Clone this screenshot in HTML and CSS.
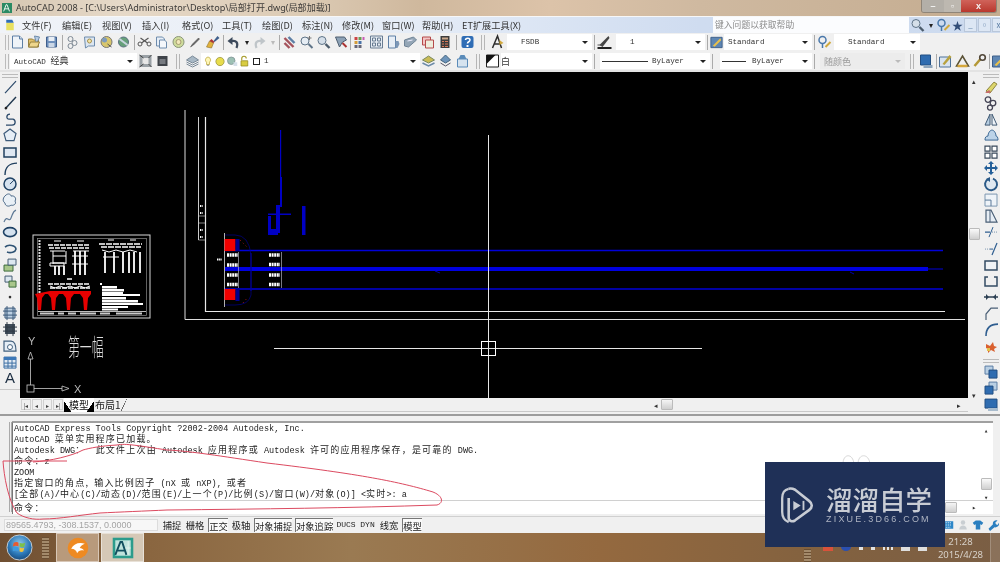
FILE: index.html
```html
<!DOCTYPE html>
<html lang="zh-CN">
<head>
<meta charset="utf-8">
<title>AutoCAD 2008</title>
<link rel="stylesheet" href="styles.css">
</head>
<body>
<svg class="defs" width="0" height="0">
  <symbol id="doc" viewBox="0 0 16 16"><path d="M3 2h7l3 3v9H3z" fill="#eef3f8" stroke="#5d7fa5"/><path d="M10 2v3h3" fill="#cfdcec" stroke="#5d7fa5"/></symbol>
  <symbol id="open" viewBox="0 0 16 16"><path d="M2 5h4l1 1h5v7H2z" fill="#e2c16a" stroke="#96803f"/><path d="M8 2l5 1-3 7z" fill="#b7cce2" stroke="#6e8cad"/><path d="M2 13l2-5h9l-2 5z" fill="#eed68c" stroke="#96803f"/></symbol>
  <symbol id="save" viewBox="0 0 16 16"><path d="M3 3h10v10H3z" fill="#6f90bc" stroke="#3f5f8c"/><path d="M5 3h6v4H5z" fill="#e8eef5"/><path d="M5 9h6v4H5z" fill="#cbd7e6"/></symbol>
  <symbol id="print" viewBox="0 0 16 16"><circle cx="6" cy="5" r="2.500" fill="none" stroke="#808b96"/><circle cx="10" cy="9" r="2.500" fill="none" stroke="#808b96"/><circle cx="6" cy="12" r="2.500" fill="none" stroke="#808b96"/></symbol>
  <symbol id="prev" viewBox="0 0 16 16"><path d="M3 3h10v9H7l-3 2z" fill="#dce6f0" stroke="#6e8cad"/><circle cx="8" cy="7" r="2" fill="#f5e6a8" stroke="#a58f4c"/></symbol>
  <symbol id="plot" viewBox="0 0 16 16"><circle cx="8" cy="8" r="5.500" fill="#d8c66c" stroke="#777"/><circle cx="6" cy="6" r="2.500" fill="#7d9bbd"/><path d="M9 10l4 3" stroke="#555"/></symbol>
  <symbol id="globe" viewBox="0 0 16 16"><circle cx="8" cy="8" r="5" fill="#66a07a" stroke="#5a6f7f"/><path d="M4 5l8 6" stroke="#c8d5de" stroke-width="2"/></symbol>
  <symbol id="cut" viewBox="0 0 16 16"><circle cx="3.500" cy="10" r="2" fill="none" stroke="#555"/><circle cx="12.500" cy="10" r="2" fill="none" stroke="#555"/><path d="M5 9l7-5M11 9L4 4" stroke="#555" stroke-width="1.200"/></symbol>
  <symbol id="copy" viewBox="0 0 16 16"><path d="M3 3h6l2 2v7H3z" fill="#e8eff7" stroke="#6e8cad"/><path d="M6 6h5l2 2v6H6z" fill="#f4f7fb" stroke="#6e8cad"/></symbol>
  <symbol id="paste" viewBox="0 0 16 16"><circle cx="8" cy="8" r="5.500" fill="#cfdc9c" stroke="#89957a"/><circle cx="8" cy="8" r="2.500" fill="#f1e8ba" stroke="#a59b70"/></symbol>
  <symbol id="brush" viewBox="0 0 16 16"><path d="M3 13l2-3 6-6 1 1-6 6z" fill="#666" stroke="#444" stroke-width=".5"/></symbol>
  <symbol id="match" viewBox="0 0 16 16"><path d="M9 7l4-5 2 2-5 4z" fill="#3f5f8c"/><path d="M2 13l3-6 4 2-2 5z" fill="#e3b23c" stroke="#8a6f2a" stroke-width=".6"/><path d="M5 7l2-2 3 3-1 1z" fill="#a33"/></symbol>
  <symbol id="undo" viewBox="0 0 16 16"><path d="M11 14c2-5 0-8-5-7" fill="none" stroke="#3d4a5c" stroke-width="2.200"/><path d="M2 7l5-4v8z" fill="#3d4a5c"/></symbol>
  <symbol id="redo" viewBox="0 0 16 16"><path d="M5 14c-2-5 0-8 5-7" fill="none" stroke="#bfc5c9" stroke-width="2.200"/><path d="M14 7l-5-4v8z" fill="#bfc5c9"/></symbol>
  <symbol id="pan" viewBox="0 0 16 16"><path d="M3 4l9 9M3 9l5 5" stroke="#a5535c" stroke-width="2.400"/><path d="M7 3l6 6" stroke="#5d7fa5" stroke-width="2.400"/></symbol>
  <symbol id="zrt" viewBox="0 0 16 16"><circle cx="6.500" cy="7" r="4" fill="#e6edf4" stroke="#5f7488"/><path d="M10 10l4 4" stroke="#5f7488" stroke-width="2"/><path d="M11 2v4M9 4h4" stroke="#777"/></symbol>
  <symbol id="zwin" viewBox="0 0 16 16"><circle cx="6.500" cy="6.500" r="4" fill="#d5dfe9" stroke="#5f7488"/><path d="M10 10l4 4" stroke="#4c5c6c" stroke-width="2.400"/></symbol>
  <symbol id="zprev" viewBox="0 0 16 16"><path d="M3 3h9l2 3-4 2-3 5-2-5z" fill="#8da2b6" stroke="#4e5e70"/><path d="M10 9l4 4" stroke="#a33" stroke-width="2"/></symbol>
  <symbol id="props" viewBox="0 0 16 16"><path d="M3 3h3v3H3z" fill="#c44"/><path d="M7 3h3v3H7z" fill="#6a9c54"/><path d="M11 3h2v3h-2z" fill="#c85ab4"/><path d="M3 7h3v3H3z" fill="#d59d3a"/><path d="M7 7h3v3H7z" fill="#4a73a8"/><path d="M3 11h3v3H3zM7 11h3v3H7z" fill="#667"/></symbol>
  <symbol id="dc" viewBox="0 0 16 16"><path d="M2 2h12v12H2z" fill="#e5ebf2" stroke="#687c92"/><path d="M4 4h3v3H4zM9 4h3v3H9zM4 9h3v3H4zM9 9h3v3H9z" fill="none" stroke="#687c92"/></symbol>
  <symbol id="sheet" viewBox="0 0 16 16"><path d="M3 2h7v12H3z" fill="#e7eef6" stroke="#5d7fa5"/><path d="M10 7h3l1 3-2 4h-2z" fill="#7c97b7"/></symbol>
  <symbol id="tool" viewBox="0 0 16 16"><path d="M2 6l9-3 3 3-8 7-4-1z" fill="#94a6b6" stroke="#6f8396"/><path d="M5 7l5-1" stroke="#eef"/></symbol>
  <symbol id="markup" viewBox="0 0 16 16"><path d="M3 3h8v8H3z" fill="#f2c6c6" stroke="#b54b4b"/><path d="M6 6h8v8H6z" fill="#eed" stroke="#b54b4b"/></symbol>
  <symbol id="calc" viewBox="0 0 16 16"><path d="M4 2h9v12H4z" fill="#3c3c3c"/><path d="M5.500 3.500h6v2h-6z" fill="#c9a68a"/><path d="M5.500 7h2v1h-2zM8.500 7h3v1h-3zM5.500 9.500h2v1h-2zM8.500 9.500h3v1h-3zM5.500 12h2v1h-2zM8.500 12h3v1h-3z" fill="#d97a5a"/></symbol>
  <symbol id="help" viewBox="0 0 16 16"><rect x="2" y="2" width="12" height="12" rx="2" fill="#2f6db5"/><path d="M6 6c0-2.500 4.500-2.500 4.500 0 0 2-2.500 1.500-2.500 3.500" fill="none" stroke="#fff" stroke-width="1.500"/><path d="M7 11h2v2H7z" fill="#fff"/></symbol>
  <symbol id="astyle" viewBox="0 0 16 16"><path d="M3 14L8 2l4 12M5 10h6" fill="none" stroke="#2c2c2c" stroke-width="1.500"/><path d="M10 6l4 3-4 2z" fill="#d2a93e"/></symbol>
  <symbol id="wkspace" viewBox="0 0 16 16"><path d="M2 2h12v12H2z" fill="#9aa1a6"/><path d="M5 5h6v6H5z" fill="#e7e7e7"/><path d="M2 2l4 3M14 2l-3 3M2 14l4-3M14 14l-3-3" stroke="#444"/></symbol>
  <symbol id="wk2" viewBox="0 0 16 16"><path d="M3 3h10v10H3z" fill="#40444a"/><path d="M5 6h6v5H5z" fill="#787c82"/></symbol>
  <symbol id="layers" viewBox="0 0 16 16"><path d="M8 3l6 4-6 3-6-3z" fill="#a8b8c5" stroke="#7a8a98"/><path d="M2 9l6 3 6-3M2 11l6 3 6-3" fill="none" stroke="#7a8a98"/></symbol>
  <symbol id="lamp" viewBox="0 0 16 16"><path d="M8 2a4 4 0 0 1 2 7v3H6V9a4 4 0 0 1 2-7z" fill="#fff7b8" stroke="#bda83c"/><path d="M6.500 13h3" stroke="#777"/></symbol>
  <symbol id="sun" viewBox="0 0 16 16"><circle cx="8" cy="8" r="5.500" fill="#e7dc4c" stroke="#97903a"/></symbol>
  <symbol id="frz" viewBox="0 0 16 16"><circle cx="7" cy="7" r="5" fill="#9cc0b4" stroke="#7c8f92"/><path d="M10 9h5v5h-5z" fill="#d5e0ea"/></symbol>
  <symbol id="lock" viewBox="0 0 16 16"><path d="M5 6V4a3 3 0 0 1 6 0" fill="none" stroke="#a59a28" stroke-width="1.500"/><path d="M4 7h9v7H4z" fill="#d8cc42" stroke="#93881e"/></symbol>
  <symbol id="lay2" viewBox="0 0 16 16"><path d="M8 3l6 4-6 3-6-3z" fill="#c9bb55" stroke="#7a8a60"/><path d="M2 10l6 3 6-3" fill="none" stroke="#6b8aa8" stroke-width="1.500"/></symbol>
  <symbol id="lay3" viewBox="0 0 16 16"><path d="M8 2l5 5-5 3-5-3z" fill="#6d94ba" stroke="#44647f"/><path d="M3 10l5 3 5-3" fill="none" stroke="#556"/></symbol>
  <symbol id="lay4" viewBox="0 0 16 16"><path d="M3 6h10v8H3z" fill="#d6e3ef" stroke="#5a8bb9"/><path d="M6 2h4l2 4H4z" fill="#5a8bb9"/></symbol>
  <symbol id="color" viewBox="0 0 16 16"><path d="M2 2h12v12H2z" fill="#fff" stroke="#222"/><path d="M2 2h9L2 11z" fill="#111"/></symbol>
  <symbol id="lw" viewBox="0 0 16 16"><path d="M1 14h14" stroke="#222" stroke-width="2"/><path d="M3 11l9-9 1 2-7 9z" fill="#444"/><path d="M1 11h5" stroke="#555"/></symbol>
  <symbol id="tstyle" viewBox="0 0 16 16"><path d="M2 3h12v11H2z" fill="#5e86b3" stroke="#3c5f89"/><path d="M4 12l8-8 1 2-7 7z" fill="#e8c04a"/></symbol>
  <symbol id="dstyle" viewBox="0 0 16 16"><circle cx="6" cy="6" r="3.500" fill="none" stroke="#4a78ab" stroke-width="1.500"/><path d="M6 9v5" stroke="#4a78ab" stroke-width="1.500"/><path d="M9 13l5-5" stroke="#d0a93c" stroke-width="2"/></symbol>
  <symbol id="r1" viewBox="0 0 16 16"><path d="M2 2h10v10H2z" fill="#2f6cb0" stroke="#234f82"/><path d="M5 12h9v3H5z" fill="#8fa6bd"/></symbol>
  <symbol id="edit" viewBox="0 0 16 16"><path d="M2 4h11v10H2z" fill="#d9e4ef" stroke="#4f7299"/><path d="M5 11l7-9 2 2-7 8z" fill="#b8a23e"/></symbol>
  <symbol id="tri" viewBox="0 0 16 16"><path d="M8 3l6 10H2z" fill="none" stroke="#5a5236" stroke-width="1.500"/><path d="M3 13h10" stroke="#d5a73c" stroke-width="2.500"/></symbol>
  <symbol id="key" viewBox="0 0 16 16"><path d="M3 13l6-7" stroke="#b49836" stroke-width="2.500"/><circle cx="11" cy="4.500" r="2.800" fill="none" stroke="#51473a" stroke-width="1.600"/></symbol>
  <symbol id="l-line" viewBox="0 0 16 16"><path d="M3 14L14 2" stroke="#2c4a6b" stroke-width="1.200"/></symbol>
  <symbol id="l-ray" viewBox="0 0 16 16"><path d="M3 14L14 2" stroke="#20384f" stroke-width="1.400"/><circle cx="4" cy="13" r="1.300" fill="#222"/></symbol>
  <symbol id="l-pline" viewBox="0 0 16 16"><path d="M4 14h6c4 0 4-5 1-6H7c-3 0-3-5 1-5" fill="none" stroke="#2c4a6b" stroke-width="1.300"/></symbol>
  <symbol id="l-poly" viewBox="0 0 16 16"><path d="M8 2l6 4.500-2 7H4l-2-7z" fill="#e6eef6" stroke="#3c5a7a" stroke-width="1.200"/></symbol>
  <symbol id="l-rect" viewBox="0 0 16 16"><path d="M2 4h12v9H2z" fill="#dfe8f2" stroke="#20405f" stroke-width="1.500"/></symbol>
  <symbol id="l-arc" viewBox="0 0 16 16"><path d="M3 15C3 7 8 3 15 3" fill="none" stroke="#20405f" stroke-width="1.400"/></symbol>
  <symbol id="l-circle" viewBox="0 0 16 16"><circle cx="8" cy="8" r="6" fill="#d5e2ef" stroke="#1f4265" stroke-width="1.500"/><path d="M8 8l4-4" stroke="#1f4265"/></symbol>
  <symbol id="l-cloud" viewBox="0 0 16 16"><path d="M4 3c2-2 5-1 5 1 3-1 6 2 4 5 2 3-2 5-4 4-2 2-6 1-6-2-3-2-2-6 1-8z" fill="#e9f0f6" stroke="#4f6c8a"/></symbol>
  <symbol id="l-spline" viewBox="0 0 16 16"><path d="M2 14c3-8 5 1 7-4s2-7 5-8" fill="none" stroke="#5f7a96" stroke-width="1.200"/></symbol>
  <symbol id="l-ell" viewBox="0 0 16 16"><ellipse cx="8" cy="8" rx="6.500" ry="4.500" fill="#d5e2ef" stroke="#1f4265" stroke-width="1.600"/></symbol>
  <symbol id="l-earc" viewBox="0 0 16 16"><path d="M3 6a6 4 0 0 1 11 2 6 4 0 0 1-9 3" fill="none" stroke="#2f5374" stroke-width="1.600"/></symbol>
  <symbol id="l-ins" viewBox="0 0 16 16"><path d="M2 8h9v6H2z" fill="#a8c68a" stroke="#3c6b3c"/><path d="M6 2h8v6H6z" fill="#dce7f0" stroke="#465d74"/></symbol>
  <symbol id="l-blk" viewBox="0 0 16 16"><path d="M3 3h7v6H3z" fill="#dce7f0" stroke="#465d74"/><path d="M7 8h7v6H7z" fill="#a8c68a" stroke="#3c6b3c"/></symbol>
  <symbol id="l-pt" viewBox="0 0 16 16"><circle cx="8" cy="8" r="1.300" fill="#333"/></symbol>
  <symbol id="l-hat" viewBox="0 0 16 16"><path d="M3 3h10v10H3z" fill="#bcd0e3" stroke="#3c5a7a"/><path d="M1 6h14M1 10h14M5 1v14M11 1v14" stroke="#3c5a7a"/></symbol>
  <symbol id="l-grad" viewBox="0 0 16 16"><path d="M3 3h10v10H3z" fill="#3f4c5a"/><path d="M1 6h14M1 10h14M5 1v14M11 1v14" stroke="#303a46"/></symbol>
  <symbol id="l-reg" viewBox="0 0 16 16"><path d="M2 3h7c4 0 5 6 5 10H2z" fill="#e6eef6" stroke="#42607e" stroke-width="1.200"/><circle cx="8" cy="9" r="2.500" fill="#fff" stroke="#42607e"/></symbol>
  <symbol id="l-tbl" viewBox="0 0 16 16"><path d="M2 3h12v11H2z" fill="#e2ebf4" stroke="#3c6ea3"/><path d="M2 3h12v3H2z" fill="#3c78b8"/><path d="M2 9h12M2 12h12M6 6v8M10 6v8" stroke="#3c6ea3"/></symbol>
  <symbol id="m-erase" viewBox="0 0 16 16"><path d="M3 12L11 3l3 2-7 9z" fill="#dcd56a" stroke="#8c8440"/><path d="M2 14l4-3 2 2-2 1z" fill="#c86a6a"/></symbol>
  <symbol id="m-copy" viewBox="0 0 16 16"><circle cx="5" cy="4.500" r="2.800" fill="none" stroke="#445" stroke-width="1.300"/><circle cx="10" cy="8" r="2.800" fill="none" stroke="#445" stroke-width="1.300"/><circle cx="7" cy="12.500" r="2.500" fill="none" stroke="#445" stroke-width="1.300"/></symbol>
  <symbol id="m-mir" viewBox="0 0 16 16"><path d="M7 3v11H2z" fill="#b7cee2" stroke="#405a74"/><path d="M9 3v11h5z" fill="#eef3f8" stroke="#405a74"/></symbol>
  <symbol id="m-off" viewBox="0 0 16 16"><path d="M2 13c0-3 1-4 3-4 0-3 2-6 4-6s4 3 4 6c1 0 2 1 2 4z" fill="#bcd3e8" stroke="#3e6a95"/></symbol>
  <symbol id="m-arr" viewBox="0 0 16 16"><path d="M2 2h5v5H2zM9 2h5v5H9zM2 9h5v5H2zM9 9h5v5H9z" fill="#fff" stroke="#3a4a5c" stroke-width="1.200"/></symbol>
  <symbol id="m-move" viewBox="0 0 16 16"><path d="M8 1l3 3H9v3h3V5l3 3-3 3V9H9v3h2l-3 3-3-3h2V9H4v2L1 8l3-3v2h3V4H5z" fill="#235f99"/></symbol>
  <symbol id="m-rot" viewBox="0 0 16 16"><path d="M5 3a6 6 0 1 0 5-.5" fill="#dfe8f1" stroke="#2b5a88" stroke-width="2"/><path d="M7 1v5L3 3z" fill="#2b5a88"/></symbol>
  <symbol id="m-scale" viewBox="0 0 16 16"><path d="M2 2h12v12H2z" fill="#eef3f8" stroke="#7d97b0"/><path d="M2 8h6v6" fill="none" stroke="#5a7998"/></symbol>
  <symbol id="m-str" viewBox="0 0 16 16"><path d="M3 2h5l6 12H3z" fill="#e6edf4" stroke="#4a5f76" stroke-width="1.200"/><path d="M7 2v12" stroke="#4a5f76"/></symbol>
  <symbol id="m-trim" viewBox="0 0 16 16"><path d="M2 8h5" stroke="#2f5e90" stroke-width="1.300"/><path d="M9 8h5" stroke="#7d97b0" stroke-dasharray="1 1"/><path d="M6 13L10 3" stroke="#2f5e90"/></symbol>
  <symbol id="m-ext" viewBox="0 0 16 16"><path d="M2 8h5" stroke="#7d97b0" stroke-dasharray="1 1"/><path d="M7 8h3" stroke="#2f5e90"/><path d="M9 14L14 2" stroke="#2f5e90" stroke-width="1.200"/></symbol>
  <symbol id="m-brk" viewBox="0 0 16 16"><path d="M2 4h12v9H2z" fill="#f0f3f6" stroke="#334b63" stroke-width="1.500"/></symbol>
  <symbol id="m-brk2" viewBox="0 0 16 16"><path d="M5 4H2v9h12V4h-3" fill="none" stroke="#334b63" stroke-width="1.500"/></symbol>
  <symbol id="m-join" viewBox="0 0 16 16"><path d="M1 8h14" stroke="#2b3f52" stroke-width="1.500"/><path d="M3 5l3 3-3 3zM13 5l-3 3 3 3z" fill="#2b3f52"/></symbol>
  <symbol id="m-cham" viewBox="0 0 16 16"><path d="M3 15V9l5-6h7" fill="none" stroke="#4a5f76" stroke-width="1.200"/></symbol>
  <symbol id="m-fil" viewBox="0 0 16 16"><path d="M3 15C3 7 7 3 15 3" fill="none" stroke="#2f5e90" stroke-width="1.600"/></symbol>
  <symbol id="m-exp" viewBox="0 0 16 16"><path d="M3 6l4 2 3-4 1 4 3 1-3 2 1 3-4-2-3 3 0-4-2-1z" fill="#d9602f"/><path d="M4 10h3v3H4z" fill="#e3c14a"/></symbol>
  <symbol id="d-1" viewBox="0 0 16 16"><path d="M2 2h8v8H2z" fill="#b9cfe3" stroke="#5d7fa5"/><path d="M6 6h8v8H6z" fill="#2f6cb0" stroke="#234f82"/></symbol>
  <symbol id="d-2" viewBox="0 0 16 16"><path d="M6 2h8v8H6z" fill="#b9cfe3" stroke="#5d7fa5"/><path d="M2 6h8v8H2z" fill="#2f6cb0" stroke="#234f82"/></symbol>
  <symbol id="d-3" viewBox="0 0 16 16"><path d="M2 3h12v9H2z" fill="#2f6cb0" stroke="#234f82"/><path d="M5 12h10v3H5z" fill="#a9bccd"/></symbol>
</svg>

<div class="app">
  <header class="titlebar">
    <svg class="appicon" viewBox="0 0 12 12"><rect width="12" height="12" fill="#2a8a63"/><path d="M2 10L5 2h1l3 8M3 7h5" fill="none" stroke="#e8f5ef" stroke-width="1.200"/></svg>
    <span class="titletext">AutoCAD 2008 - [C:\Users\Administrator\Desktop\局部打开.dwg(局部加载)]</span>
    <div class="winbtns">
      <span class="wb wb-min">–</span><span class="wb wb-max">▫</span><span class="wb wb-close">x</span>
    </div>
  </header>

  <nav class="menubar">
    <svg class="menuicon" viewBox="0 0 16 16"><path d="M3 5h10v10H3z" fill="#e8e060"/><path d="M3 1h8l2 4H3z" fill="#2f6db5"/></svg>
    <span class="mi">文件(F)</span><span class="mi">编辑(E)</span><span class="mi">视图(V)</span><span class="mi">插入(I)</span><span class="mi">格式(O)</span><span class="mi">工具(T)</span><span class="mi">绘图(D)</span><span class="mi">标注(N)</span><span class="mi">修改(M)</span><span class="mi">窗口(W)</span><span class="mi">帮助(H)</span><span class="mi mi-wide">ET扩展工具(X)</span>
    <div class="helpbox">键入问题以获取帮助</div>
    <svg class="ic ic-m"><use href="#zwin"/></svg><span class="drop drop-m">▾</span>
    <svg class="ic ic-m"><use href="#dstyle"/></svg><span class="star">★</span>
    <span class="docbtn">_</span><span class="docbtn">▫</span><span class="docbtn">x</span>
  </nav>

  <div class="toolbar tb1">
    <i class="grip"></i>
    <svg class="ic"><use href="#doc"/></svg><svg class="ic"><use href="#open"/></svg><svg class="ic"><use href="#save"/></svg><i class="sep"></i>
    <svg class="ic"><use href="#print"/></svg><svg class="ic"><use href="#prev"/></svg><svg class="ic"><use href="#plot"/></svg><svg class="ic"><use href="#globe"/></svg><i class="sep"></i>
    <svg class="ic"><use href="#cut"/></svg><svg class="ic"><use href="#copy"/></svg><svg class="ic"><use href="#paste"/></svg><svg class="ic"><use href="#brush"/></svg><svg class="ic"><use href="#match"/></svg><i class="sep"></i>
    <svg class="ic"><use href="#undo"/></svg><span class="drop">▾</span><svg class="ic"><use href="#redo"/></svg><span class="drop drop-off">▾</span><i class="sep"></i>
    <svg class="ic"><use href="#pan"/></svg><svg class="ic"><use href="#zrt"/></svg><svg class="ic"><use href="#zwin"/></svg><svg class="ic"><use href="#zprev"/></svg><i class="sep sep-n"></i>
    <svg class="ic"><use href="#props"/></svg><svg class="ic"><use href="#dc"/></svg><svg class="ic"><use href="#sheet"/></svg><svg class="ic"><use href="#tool"/></svg><svg class="ic"><use href="#markup"/></svg><svg class="ic"><use href="#calc"/></svg><i class="sep sep-w"></i>
    <svg class="ic"><use href="#help"/></svg><i class="sep sep-g"></i>
    <svg class="ic"><use href="#astyle"/></svg>
    <span class="combo c-fsdb"><span class="ct ct-c">FSDB</span></span><i class="sep"></i>
    <svg class="ic"><use href="#lw"/></svg>
    <span class="combo c-one"><span class="ct ct-c">1</span></span><i class="sep"></i>
    <svg class="ic ic-n"><use href="#tstyle"/></svg>
    <span class="combo c-std"><span class="ct">Standard</span></span><i class="sep"></i>
    <svg class="ic"><use href="#dstyle"/></svg>
    <span class="combo c-std2"><span class="ct ct-c">Standard</span></span>
  </div>

  <div class="toolbar tb2">
    <i class="grip"></i>
    <span class="combo c-work"><span class="ct">AutoCAD <b class="cj">经典</b></span></span>
    <svg class="ic"><use href="#wkspace"/></svg><svg class="ic"><use href="#wk2"/></svg><i class="sep sep-g"></i>
    <svg class="ic"><use href="#layers"/></svg>
    <span class="combo c-layer">
      <svg class="lic"><use href="#lamp"/></svg><svg class="lic"><use href="#sun"/></svg><svg class="lic"><use href="#frz"/></svg><svg class="lic"><use href="#lock"/></svg><i class="swatch"></i><span class="ct">1</span>
    </span>
    <svg class="ic"><use href="#lay2"/></svg><svg class="ic"><use href="#lay3"/></svg><svg class="ic"><use href="#lay4"/></svg><i class="sep sep-g"></i>
    <svg class="ic"><use href="#color"/></svg>
    <span class="combo c-white"><b class="cj">白</b></span><i class="sep"></i>
    <span class="combo c-ltype"><i class="ltline"></i><span class="ct">ByLayer</span></span><i class="sep"></i>
    <span class="combo c-lw"><i class="ltline lt-short"></i><span class="ct">ByLayer</span></span><i class="sep"></i>
    <span class="combo combo-off c-plot"><b class="cj">随颜色</b></span><i class="sep sep-g"></i>
    <svg class="ic"><use href="#r1"/></svg><i class="sep sep-n"></i>
    <svg class="ic"><use href="#edit"/></svg><svg class="ic"><use href="#tri"/></svg><svg class="ic"><use href="#key"/></svg><i class="sep sep-n"></i>
    <svg class="ic"><use href="#tstyle"/></svg>
  </div>

  <main class="work">
    <aside class="side side-l">
      <i class="hgrip"></i>
      <svg class="sic"><use href="#l-line"/></svg><svg class="sic"><use href="#l-ray"/></svg><svg class="sic"><use href="#l-pline"/></svg><svg class="sic"><use href="#l-poly"/></svg><svg class="sic"><use href="#l-rect"/></svg><svg class="sic"><use href="#l-arc"/></svg><svg class="sic"><use href="#l-circle"/></svg><svg class="sic"><use href="#l-cloud"/></svg><svg class="sic"><use href="#l-spline"/></svg><svg class="sic"><use href="#l-ell"/></svg><svg class="sic"><use href="#l-earc"/></svg><svg class="sic"><use href="#l-ins"/></svg><svg class="sic"><use href="#l-blk"/></svg><svg class="sic"><use href="#l-pt"/></svg><svg class="sic"><use href="#l-hat"/></svg><svg class="sic"><use href="#l-grad"/></svg><svg class="sic"><use href="#l-reg"/></svg><svg class="sic"><use href="#l-tbl"/></svg>
      <span class="sic sic-a">A</span>
    </aside>

    <section class="center">
      <div class="viewport">
        <svg class="drawing" viewBox="20 72 948 326" preserveAspectRatio="none">
          <!-- title sheet thumbnail -->
          <rect x="33" y="235" width="117" height="83" fill="none" stroke="#d8d8d8" stroke-width="1"/>
          <rect x="37.500" y="238.500" width="109" height="77" fill="none" stroke="#8a8a8a" stroke-width=".7"/>
          <path d="M39.500 240v58" stroke="#ddd" stroke-width="2" stroke-dasharray="2 1"/>
          <!-- elevation A -->
          <g fill="none" stroke="#fff">
            <path d="M54 241h7M77 241h7" stroke-width="1.200"/>
            <path d="M48 245h42M49 248h40" stroke-width="1.500" stroke-dasharray="5 1"/>
            <path d="M50 251h15M73 251h16" stroke-width="1.200"/>
            <path d="M53 251v13M66 251v13M53 256h13M53 263h13" stroke-width="1"/>
            <path d="M50 263h14v3H50z" stroke-width="1"/>
            <path d="M55 266v9M59 266v9M64 266v9M75 251v24M80 251v24M85 251v24" stroke-width="1.800"/>
            <path d="M72 256h16M72 264h16" stroke-width="1"/>
          </g>
          <!-- elevation B -->
          <g fill="none" stroke="#fff">
            <path d="M108 240h6M130 240h6" stroke-width="1.200"/>
            <path d="M99 244h43M101 247h40" stroke-width="1.500" stroke-dasharray="6 1"/>
            <path d="M102 250l7 2 7-2 7 2 7-2 7 2" stroke-width="1"/>
            <path d="M105 252v21M114 252v21M123 252v21M129 252v21M134 252v21M140 252v21" stroke-width="1.800"/>
            <path d="M103 257h16" stroke-width="1"/>
          </g>
          <!-- elevation C with red section -->
          <g fill="none" stroke="#fff">
            <path d="M67 279h5" stroke-width="1.500"/>
            <path d="M48 284h42M50 288h40" stroke-width="1.500" stroke-dasharray="5 1"/>
            <path d="M50 286l5 2 5-2 5 2 5-2 5 2 5-2 5 2 5-2" stroke-width="1"/>
          </g>
          <path d="M50 291h41v3l-3 4-1 12h-3l-1-12-3-4h-6l-3 4-1 12h-3l-1-12-3-4h-4l-3 4-1 12h-3l-1-12-3-4h-3l-3 4-1 12h-3l-1-12-2-4z" fill="#e60000"/>
          <!-- notes -->
          <g fill="#fff">
            <rect x="100" y="283" width="2" height="2"/>
            <rect x="102" y="286" width="15" height="2.500"/><rect x="102" y="289" width="22" height="2.500"/><rect x="102" y="292" width="21" height="2"/><rect x="102" y="294" width="38" height="2"/><rect x="102" y="297" width="24" height="2.500"/><rect x="102" y="300" width="36" height="2.500"/><rect x="102" y="303" width="41" height="2"/><rect x="102" y="306" width="26" height="2"/><rect x="102" y="308.500" width="16" height="2"/>
          </g>
          <g fill="none" stroke="#eee"><path d="M38 311.500h108" stroke-width=".8"/><path d="M40 313.500h14M58 313.500h6M68 313.500h8M80 313.500h16M100 313.500h10M116 313.500h26" stroke-width="2" opacity=".85"/></g>

          <text class="fuk" transform="translate(68 356) scale(.95 1.900)">第一幅</text>

          <!-- UCS -->
          <g fill="none" stroke="#ccc" stroke-width=".8">
            <rect x="27" y="385" width="7" height="7"/>
            <path d="M30.500 385V359M34 388.500h28"/>
            <path d="M30.500 352l-2.500 7h5zM69 388.500l-7-2.500v5z"/>
          </g>
          <text class="ucs" x="28" y="345">Y</text>
          <text class="ucs" x="74" y="393">X</text>

          <!-- main drawing: white frame -->
          <g fill="none" stroke="#ddd">
            <path d="M185 110V319.500H965" stroke-width="1"/>
            <path d="M205.500 117V311.500H945" stroke-width="1.200" stroke="#e8e8e8"/>
            <path d="M198.500 117V240" stroke="#fff" stroke-width=".8"/>
            <path d="M198.500 240h7M198.500 216h7M198.500 223h7" stroke-width=".6"/>
          </g>
          <path d="M200 206h3M200 213h3M200 230h3M200 237h3" stroke="#fff" stroke-width="2" stroke-dasharray="1 .6"/>

          <!-- blue beams -->
          <g stroke="#0000d8" fill="none">
            <path d="M225 250.500H943" stroke-width="1.300"/>
            <path d="M225 269H928" stroke-width="3.800" stroke="#0000e0"/>
            <path d="M928 269H943" stroke-width="1"/>
            <path d="M225 289H943" stroke-width="1.600"/>
            <path d="M225 235h10q14 0 16 20v40q-2 10-16 10h-10" stroke-width=".7" stroke="#000088"/>
            <path d="M251 253v38" stroke-width="1" stroke="#0000a0"/>
            <path d="M435 271l5 2M850 272l4 2" stroke="#0000a8"/>
          </g>
          <path d="M224.500 233V307" stroke="#ddd" stroke-width=".8"/>
          <rect x="224.500" y="239" width="11" height="12" fill="#f00000"/>
          <rect x="224.500" y="289" width="11" height="11" fill="#f00000"/>
          <rect x="235.500" y="239" width="4" height="12" fill="#00008c"/>
          <rect x="235.500" y="289" width="4" height="12" fill="#00008c"/>
          <path d="M240 240l8 8M243 303l5-6" stroke="#a01818" stroke-dasharray="1 3"/>
          <!-- annotations -->
          <g fill="none" stroke="#fff" stroke-width="3.400" stroke-dasharray="2 .6">
            <path d="M227 255h11M227 265h11M227 275h11M227 284.500h11"/>
            <path d="M269 255h11M269 264.500h11M269 275h11M269 284.500h11"/>
          </g>
          <path d="M217 259.500h5" stroke="#fff" stroke-width="2" stroke-dasharray="1.200 .5"/>
          <path d="M238.500 252v36M281.500 252v36" stroke="#ccd" stroke-width=".6"/>
          <!-- blue vertical stub -->
          <g fill="#0000c4">
            <rect x="280" y="130" width="1.200" height="47"/>
            <rect x="280" y="177" width="2" height="30"/>
            <rect x="276" y="205" width="4" height="28"/>
            <rect x="268" y="213.500" width="23" height="1.500"/>
            <rect x="268" y="229" width="10" height="6"/>
            <rect x="268" y="216" width="3" height="13"/>
            <rect x="302" y="206" width="3.500" height="29"/>
          </g>

          <!-- cursor -->
          <g fill="none" stroke="#e6e6e6" stroke-width="1">
            <path d="M488.500 135V398M274 348.500H702"/>
            <rect x="481.500" y="341.500" width="14" height="14" stroke="#fff"/>
          </g>
        </svg>
      </div>
      <div class="tabsrow">
        <span class="navs"><i>|◂</i><i>◂</i><i>▸</i><i>▸|</i></span>
        <span class="tab tab-on">模型</span><span class="tab tab-off">布局1</span>
        <span class="hscroll"><span class="arr">◂</span><i class="thumb"></i><span class="arr arr-r">▸</span></span>
      </div>
    </section>

    <div class="vscroll"><span class="arr">▴</span><i class="vthumb"></i><span class="arr">▾</span></div>

    <aside class="side side-r">
      <i class="hgrip"></i>
      <svg class="sic"><use href="#m-erase"/></svg><svg class="sic"><use href="#m-copy"/></svg><svg class="sic"><use href="#m-mir"/></svg><svg class="sic"><use href="#m-off"/></svg><svg class="sic"><use href="#m-arr"/></svg><svg class="sic"><use href="#m-move"/></svg><svg class="sic"><use href="#m-rot"/></svg><svg class="sic"><use href="#m-scale"/></svg><svg class="sic"><use href="#m-str"/></svg><svg class="sic"><use href="#m-trim"/></svg><svg class="sic"><use href="#m-ext"/></svg><svg class="sic"><use href="#m-brk"/></svg><svg class="sic"><use href="#m-brk2"/></svg><svg class="sic"><use href="#m-join"/></svg><svg class="sic"><use href="#m-cham"/></svg><svg class="sic"><use href="#m-fil"/></svg><svg class="sic"><use href="#m-exp"/></svg>
      <i class="hgrip hgrip-2"></i>
      <svg class="sic"><use href="#d-1"/></svg><svg class="sic"><use href="#d-2"/></svg><svg class="sic"><use href="#d-3"/></svg>
    </aside>
  </main>

  <section class="cmdarea">
    <i class="cmdgrip"></i>
    <div class="cmdbox">
      <div class="cmdtop">
        <div class="cmdhist">
          <div class="cl">AutoCAD Express Tools Copyright ?2002-2004 Autodesk, Inc.</div>
          <div class="cl">AutoCAD <b class="cj">菜单实用程序已加载。</b></div>
          <div class="cl">Autodesk DWG<b class="cj">：</b>&nbsp;&nbsp;<b class="cj">此文件上次由</b> Autodesk <b class="cj">应用程序或</b> Autodesk <b class="cj">许可的应用程序保存，</b><b class="cj">是可靠的</b> DWG.</div>
          <div class="cl"><b class="cj">命令：</b>z</div>
          <div class="cl">ZOOM</div>
          <div class="cl"><b class="cj">指定窗口的角点,</b> <b class="cj">输入比例因子</b> (nX <b class="cj">或</b> nXP), <b class="cj">或者</b></div>
          <div class="cl">[<b class="cj">全部</b>(A)/<b class="cj">中心</b>(C)/<b class="cj">动态</b>(D)/<b class="cj">范围</b>(E)/<b class="cj">上一个</b>(P)/<b class="cj">比例</b>(S)/<b class="cj">窗口</b>(W)/<b class="cj">对象</b>(O)] &lt;<b class="cj">实时</b>&gt;: a</div>
        </div>
        <div class="cmdscroll"><span class="arr">▴</span><i class="vthumb vthumb-c"></i><span class="arr">▾</span></div>
      </div>
      <div class="cmdinput"><b class="cj">命令：</b><span class="inscroll"><i class="thumb"></i><span class="arr arr-r">▸</span></span></div>
    </div>
    <svg class="redmark" viewBox="0 0 880 120" preserveAspectRatio="none">
      <path d="M67 27H3C4 42 8 66 17 79 24 84 34 86 43 85 60 85 80 81 100 79 120 78 145 77 167 76 260 75 350 74 437 71 444 69 443 62 433 58 400 48 360 40 267 29 220 22 190 17 167 16 140 12 125 9 117 11 100 12 90 14 83 16 72 22 50 27 33 28" fill="none" stroke="#dc4a60" stroke-width="1"/>
      <path d="M843 30c0-11 10-11 11 0M858 30c0-11 11-11 12 0" fill="none" stroke="#d8d8d8" stroke-width="1"/>
    </svg>
  </section>

  <footer class="statusbar">
    <span class="coords">89565.4793, -308.1537, 0.0000</span>
    <span class="sb sb-2">捕捉</span><span class="sb sb-2">栅格</span><span class="sb sb-2 on">正交</span><span class="sb sb-2">极轴</span><span class="sb sb-4 on">对象捕捉</span><span class="sb sb-4 on">对象追踪</span><span class="sb sb-l">DUCS</span><span class="sb sb-s">DYN</span><span class="sb sb-2">线宽</span><span class="sb sb-2 on">模型</span>
    <span class="tray-r">
      <svg class="tr" viewBox="0 0 16 16"><path d="M1 3h14v10H1z" fill="#2c86c8"/><path d="M3 5h10M3 8h10M5 11h6" stroke="#fff" stroke-dasharray="1.500 1"/></svg>
      <svg class="tr" viewBox="0 0 16 16"><circle cx="8" cy="4.500" r="3" fill="#c9ced2"/><path d="M3 14c0-7 10-7 10 0z" fill="#c9ced2"/></svg>
      <svg class="tr" viewBox="0 0 16 16"><path d="M5 2h6l4 3-2 3-2-1v7H5V7L3 8 1 5z" fill="#2b7fc0"/></svg>
      <svg class="tr" viewBox="0 0 16 16"><path d="M2 13l6-6c-1-3 2-6 6-5l-3 3 1 2 2 1 2-3c1 4-3 7-6 6l-6 5z" fill="#2b7fc0"/></svg>
    </span>
  </footer>

  <div class="taskbar">
    <svg class="orb" viewBox="0 0 28 28">
      <defs><radialGradient id="og" cx=".5" cy=".35" r=".7"><stop offset="0" stop-color="#8fc7ea"/><stop offset=".6" stop-color="#2b78b8"/><stop offset="1" stop-color="#16426f"/></radialGradient></defs>
      <circle cx="14" cy="14" r="13" fill="url(#og)" stroke="#c6d0d6"/>
      <path d="M8 9c2-1 4-1 5 0v4c-2-1-4-1-6 0z" fill="#e85b30"/><path d="M14 9c2 1 4 1 6 0l-1 4c-1 1-3 1-5 0z" fill="#7cc04a"/><path d="M7 14c2-1 4-1 6 0v4c-2-1-4-1-6 0z" fill="#3d9be0"/><path d="M14 14c2 1 4 1 5 0l-1 4c-1 1-3 1-4 0z" fill="#f0c43a"/>
    </svg>
    <i class="tgrip"></i>
    <span class="tbtn tbtn-a">
      <svg viewBox="0 0 28 28" class="tico"><circle cx="14" cy="14" r="12" fill="#ee8a22"/><path d="M6 15c3-6 9-8 16-6-3 1-5 3-6 5 2 0 4 1 5 3-4-1-6 0-8 3-1-3-3-5-7-5z" fill="#fff"/></svg>
    </span>
    <span class="tbtn tbtn-b">
      <svg viewBox="0 0 28 28" class="tico"><rect x="2" y="2" width="24" height="24" fill="#2c9c8c"/><rect x="5" y="5" width="18" height="18" fill="#bfe3dc"/><path d="M5 22L11 7h2l5 15M8 17h8" fill="none" stroke="#12505f" stroke-width="2.200"/><path d="M20 6v16M17 14h6" stroke="#e8f5ef"/></svg>
    </span>
    <span class="tray-b">
      <i class="tgrip tgrip-b"></i>
      <i class="tb tb-red"></i><i class="tb tb-blue"></i><i class="tb tb-dot"></i><i class="tb tb-dot"></i><i class="tb tb-bars"></i><i class="tb tb-white"></i><i class="tb tb-white"></i>
    </span>
    <span class="clock"><span>21:28</span><span>2015/4/28</span></span>
    <i class="showdesk"></i>
  </div>

  <aside class="brand">
    <svg class="brand-logo" viewBox="0 0 36 40">
      <path d="M9 38C4 36 2 32 2 27V12C2 7 4 3 9 2" fill="none" stroke="#c8ccd4" stroke-width="2.500"/>
      <path d="M9 2c3-1 5 0 7 1l15 12c4 3 4 7 0 10L16 36c-3 2-7 1-7-3V12" fill="none" stroke="#c8ccd4" stroke-width="2.800"/>
      <path d="M14 15l8 5-8 5z" fill="#c8ccd4"/><path d="M24 15h2v10h-2z" fill="#c8ccd4"/>
    </svg>
    <div class="brand-text">
      <div class="brand-cn">溜溜自学</div>
      <div class="brand-en">ZIXUE.3D66.COM</div>
    </div>
  </aside>
</div>
</body>
</html>
```

FILE: styles.css
```css
* { box-sizing: border-box; }
html, body { margin: 0; padding: 0; background: #f0f0f0; }
.defs { position: absolute; }
i, b { font-style: normal; font-weight: normal; }

.app {
  position: relative;
  width: 1000px;
  height: 562px;
  overflow: hidden;
  display: flex;
  flex-direction: column;
  font-family: "Noto Sans CJK SC", "Liberation Sans", sans-serif;
  color: #222;
  background: #f0f0f0;
  filter: blur(.35px);
}

/* title */
.titlebar {
  height: 16px;
  flex: none;
  display: flex;
  align-items: center;
  padding-left: 2px;
  background: linear-gradient(90deg, #d6c7b2 0, #e6d9c8 12%, #dccbb5 30%, #cfb89d 42%, #dcc3a9 55%, #cfb9a0 70%, #c4ac90 100%);
}
.appicon { width: 10px; height: 10px; margin-right: 4px; flex: none; }
.titletext { font-size: 9.100px; line-height: 16px; color: #3c3a38; white-space: nowrap; font-family: "Noto Sans", "Noto Sans CJK SC", sans-serif; }
.winbtns { margin-left: auto; margin-right: 3px; display: flex; height: 13px; align-self: flex-start; border: 1px solid #8f8578; border-top: 0; border-radius: 0 0 3px 3px; overflow: hidden; }
.wb { height: 12px; display: flex; align-items: center; justify-content: center; font-size: 9px; line-height: 12px; color: #f4f4f4; font-weight: bold; font-family: "Liberation Sans", sans-serif; }
.wb-min { width: 22px; background: #b3afa8; }
.wb-max { width: 17px; background: #bdb8b0; }
.wb-close { width: 35px; background: linear-gradient(#d0635a, #b9382e); }

/* menu */
.menubar {
  height: 17px;
  flex: none;
  display: flex;
  align-items: center;
  padding-left: 4px;
  background: linear-gradient(90deg, #f0f3f8 0, #e6edf7 40%, #cfdcf0 70%, #cddbef 100%);
  border-top: 1px solid #f7f7f7;
}
.menuicon { width: 12px; height: 14px; margin-right: 6px; flex: none; }
.mi { width: 40px; font-size: 9.200px; line-height: 16px; white-space: nowrap; color: #333; flex: none; }
.mi-wide { width: 258px; }
.helpbox { width: 196px; height: 16px; flex: none; background: #fbfcfe; font-size: 8.800px; line-height: 16px; padding-left: 2px; color: #8b8b8b; margin-left: -7px; }
.ic-m { width: 13px; height: 14px; }
.drop-m { width: 8px; }
.star { width: 14px; text-align: center; font-size: 11px; line-height: 14px; color: #324e78; }
.docbtn { width: 13px; margin-left: 1px; height: 14px; background: #dde7f4; border: 1px solid #b9c7da; font-size: 8px; line-height: 11px; text-align: center; color: #5d7fa5; flex: none; }

/* toolbars */
.toolbar {
  flex: none;
  display: flex;
  align-items: center;
  background: #f0f0f0;
}
.tb1 { padding-left: 5px; height: 18px; }
.tb2 { padding: 1px 0 0 5px; height: 21px; border-bottom: 2px solid #e3e3e3; }
.grip { width: 4px; height: 15px; flex: none; border-left: 1px solid #bbb; border-right: 1px solid #bbb; }
.sep { width: 4px; height: 15px; flex: none; background: linear-gradient(#aaa, #aaa) center / 1px 100% no-repeat; }
.sep-n { width: 2px; }
.sep-w { width: 6px; }
.sep-g { width: 13px; background: linear-gradient(#b6b6b6, #b6b6b6) 5px 0 / 1px 100% no-repeat, linear-gradient(#b6b6b6, #b6b6b6) 8px 0 / 1px 100% no-repeat; }
.ic { width: 17px; height: 16px; flex: none; }
.ic-n { width: 15px; }
.drop { width: 9px; flex: none; text-align: center; font-size: 8px; line-height: 12px; color: #222; }
.drop-off { color: #bbb; }

.combo {
  position: relative;
  height: 16px;
  flex: none;
  display: flex;
  align-items: center;
  background: #fff;
  padding-left: 4px;
  font-family: "Liberation Mono", "Noto Sans CJK SC", monospace;
  font-size: 7.600px;
  color: #333;
}
.combo::after {
  content: "";
  position: absolute;
  right: 4px;
  top: 7px;
  border-left: 3px solid transparent;
  border-right: 3px solid transparent;
  border-top: 3px solid #222;
}
.combo .cj { font-size: 9px; line-height: 1; letter-spacing: 0; }
.ct { white-space: nowrap; }
.ct-c { margin-left: 10px; }
.cj { font-family: "Noto Sans CJK SC", sans-serif; font-size: 9px; letter-spacing: 1.200px; line-height: 0; }
.c-fsdb { width: 85px; margin-left: 1px; }
.c-one { width: 89px; margin-left: 3px; }
.c-std { width: 88px; }
.c-std2 { width: 86px; margin-left: 1px; }
.c-work { width: 127px; margin-left: 1px; }
.c-layer { width: 219px; padding-left: 1px; }
.lic { width: 12px; height: 13px; flex: none; }
.swatch { width: 7px; height: 7px; border: 1px solid #222; background: #fff; margin: 0 4px 0 3px; flex: none; }
.c-white { width: 91px; padding-left: 0; }
.c-ltype { width: 110px; padding-left: 2px; margin-left: 4px; }
.c-lw { width: 92px; padding-left: 2px; margin-left: 6px; }
.c-plot { width: 85px; margin-left: 4px; }
.ltline { height: 1px; background: #333; width: 46px; margin-right: 4px; flex: none; }
.lt-short { width: 24px; margin-right: 6px; }
.combo-off { background: #ececec; color: #999; }
.combo-off::after { border-top-color: #bbb; }

/* work area */
.work {
  height: 342px;
  flex: none;
  display: flex;
  background: #f0f0f0;
}
.side { width: 20px; flex: none; display: flex; flex-direction: column; align-items: center; }
.side-l { height: 318px; border-bottom: 1px solid #c9c9c9; }
.side-r { width: 19px; margin-left: 1px; }
.hgrip { width: 16px; height: 4px; margin: 2px 0 1px; border-top: 1px solid #bbb; border-bottom: 1px solid #bbb; flex: none; }
.hgrip-2 { margin: 5px 0 1px; }
.sic { width: 16px; height: 16.170px; flex: none; }
.sic-a { text-align: center; font-size: 15px; line-height: 16px; font-family: "Liberation Sans", sans-serif; color: #1c2e42; }
.center { width: 948px; flex: none; display: flex; flex-direction: column; }
.viewport { height: 326px; flex: none; background: #000; }
.drawing { display: block; width: 948px; height: 326px; }
.fuk { font-family: "Noto Sans CJK SC", sans-serif; font-size: 12.500px; fill: #dcdcdc; font-weight: 300; }
.ucs { font-family: "Liberation Sans", sans-serif; font-size: 11px; fill: #b8b8b8; }

.tabsrow { height: 14px; flex: none; display: flex; align-items: center; font-size: 10px; border-bottom: 1px solid #c8c8c8; }
.navs { display: flex; width: 44px; flex: none; padding-left: 1px; }
.navs i { width: 10px; height: 11px; font-size: 6px; line-height: 11px; text-align: center; border: 1px solid #d0d0d0; color: #444; margin-right: 1px; }
.tab { height: 14px; font-size: 10px; line-height: 14px; text-align: center; flex: none; white-space: nowrap; }
.tab-on { width: 30px; color: #111; background: linear-gradient(55deg, #000 0 30%, transparent 31%) left bottom / 50% 100% no-repeat, linear-gradient(-55deg, #000 0 30%, transparent 31%) right bottom / 50% 100% no-repeat, #fff; }
.tab-off { width: 32px; margin-left: 1px; text-align: left; background: linear-gradient(-65deg, transparent 0 47%, #666 48% 53%, transparent 54%) right / 6px 100% no-repeat; }
.hscroll { margin-left: auto; width: 323px; height: 13px; display: flex; align-items: center; padding: 0 4px 0 6px; }
.arr { width: 10px; font-size: 7px; line-height: 12px; text-align: center; color: #333; flex: none; }
.arr-r { margin-left: auto; }
.thumb { width: 12px; height: 11px; flex: none; background: linear-gradient(#f5f5f5, #cfcfcf); border: 1px solid #bbb; border-radius: 1px; }
.vscroll { width: 12px; height: 326px; flex: none; display: flex; flex-direction: column; align-items: center; padding-top: 3px; }
.vthumb { width: 11px; height: 12px; margin: 141px 0 149px; background: linear-gradient(#fafafa, #cfcfcf); border: 1px solid #bbb; border-radius: 1px; flex: none; }

/* command */
.cmdarea {
  position: relative;
  height: 103px;
  flex: none;
  display: flex;
  padding: 6px 7px 0 9px;
  border-top: 2px solid #9c9c9c;
  border-bottom: 1px solid #d0d0d0;
  background: #f0f0f0;
}
.cmdgrip { width: 3px; height: 90px; border-left: 1px solid #aaa; border-right: 1px solid #aaa; flex: none; }
.cmdbox { flex: 1; display: flex; flex-direction: column; height: 92px; background: #fff; border-top: 1px solid #a0a0a0; box-shadow: 0 -1px 0 #a0a0a0; border-left: 1px solid #777; font-family: "Liberation Mono", "Noto Sans CJK SC", monospace; font-size: 8.500px; color: #222; }
.cmdtop { display: flex; height: 77px; flex: none; }
.cmdhist { flex: 1; padding: 1px 0 0 1px; }
.cl { height: 11px; line-height: 11px; white-space: pre; }
.cmdinput { height: 14px; flex: none; display: flex; align-items: center; border-top: 1px solid #d0d0d0; padding-left: 1px; }
.cmdinput .cj { line-height: 13px; }
.inscroll { margin-left: auto; width: 48px; display: flex; align-items: center; padding-right: 14px; }
.cmdscroll { width: 14px; flex: none; display: flex; flex-direction: column; align-items: center; padding-top: 2px; }
.vthumb-c { margin: 41px 0 2px; width: 11px; height: 12px; }
.redmark { position: absolute; left: 0; top: 18px; width: 880px; height: 120px; pointer-events: none; }

/* status */
.statusbar { height: 16px; flex: none; display: flex; align-items: center; padding-left: 4px; background: #f0f0f0; }
.coords { width: 154px; height: 12px; flex: none; margin-right: 4px; font-size: 9px; line-height: 11px; color: #a4a4a4; background: #f7f7f7; border: 1px solid #dcdcdc; padding-left: 1px; font-family: "Liberation Sans", sans-serif; white-space: nowrap; overflow: hidden; }
.sb { height: 14px; font-size: 9.300px; line-height: 14px; text-align: center; flex: none; margin-right: 3px; color: #222; white-space: nowrap; }
.sb-2 { width: 20px; }
.sb-4 { width: 38px; }
.sb-l { width: 20px; font-family: "Liberation Mono", monospace; font-size: 8px; }
.sb-s { width: 17px; font-family: "Liberation Mono", monospace; font-size: 8px; }
.sb.on { border-top: 1px solid #777; border-left: 1px solid #777; background: #fafafa; }
.tray-r { margin-left: auto; display: flex; gap: 3px; padding-right: 1px; align-items: center; flex: none; }
.tr { width: 12px; height: 12px; flex: none; display: block; }

/* taskbar */
.taskbar { position: relative; flex: 1; display: flex; align-items: center; padding-left: 6px; background: linear-gradient(90deg, #6f4f32 0, #8a6640 15%, #9a7a52 35%, #94693f 60%, #84623f 80%, #7a5e44 100%); }
.orb { width: 27px; height: 27px; flex: none; }
.tgrip { width: 7px; height: 22px; margin: 0 7px 0 9px; flex: none; background: repeating-linear-gradient(#6a4e32 0 1px, #a38a6b 1px 3px); }
.tbtn { width: 43px; height: 29px; flex: none; margin-right: 2px; display: flex; align-items: center; justify-content: center; border: 1px solid rgba(255, 255, 255, .45); }
.tbtn-a { background: #b89a7c; }
.tbtn-b { background: #d5c8b6; }
.tico { width: 24px; height: 24px; }
.tray-b { margin-left: auto; margin-right: 11px; display: flex; align-items: flex-start; gap: 8px; height: 29px; flex: none; padding-top: 10px; }
.tgrip-b { margin: 6px 4px 0 0; height: 13px; }
.tb { display: block; width: 10px; height: 8px; flex: none; }
.tb-red { background: #d8523a; }
.tb-blue { background: #2a4fb0; border-radius: 50%; }
.tb-dot { width: 4px; height: 7px; background: #e2e2e2; }
.tb-bars { height: 7px; background: linear-gradient(90deg, #e6e6e6 0 2px, transparent 2px 4px) 0 0 / 4px 100%; }
.tb-white { width: 9px; background: #dedede; }
.clock { margin-right: 7px; display: flex; flex-direction: column; align-items: center; font-family: "Noto Sans", sans-serif; font-size: 9.500px; line-height: 13px; color: #d8d2ca; }
.showdesk { width: 10px; height: 29px; flex: none; background: rgba(255, 255, 255, .12); border-left: 1px solid rgba(255, 255, 255, .2); }

/* watermark */
.brand { position: absolute; left: 765px; top: 462px; width: 180px; height: 85px; display: flex; align-items: flex-start; background: #1f3057; color: #c8ccd4; padding: 25px 0 0 14px; }
.brand-logo { width: 36px; height: 37px; flex: none; margin-right: 11px; }
.brand-text { display: flex; flex-direction: column; margin-top: -2px; }
.brand-cn { font-size: 26.500px; line-height: 27px; font-weight: 500; white-space: nowrap; }
.brand-en { font-family: "Liberation Sans", sans-serif; font-size: 9px; line-height: 10px; letter-spacing: 2.200px; margin-top: 2px; white-space: nowrap; color: #aeb4c2; }
```
